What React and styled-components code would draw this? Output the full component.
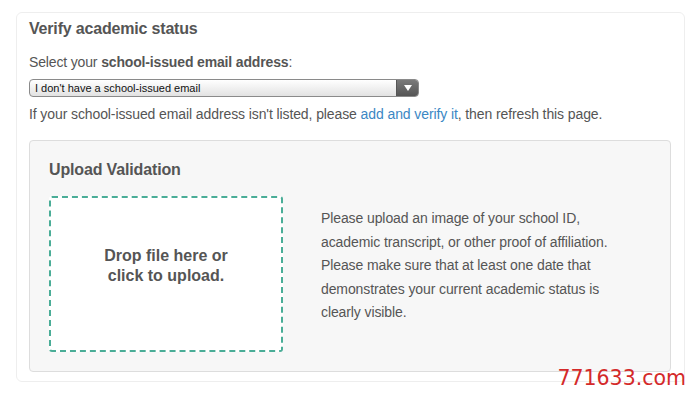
import React from 'react';
import styled, { createGlobalStyle } from 'styled-components';

const GlobalStyle = createGlobalStyle`
	body {
		margin: 0;
		background: #fff;
		font-family: "Liberation Sans", Arial, sans-serif;
		color: #555;
	}
`;

const Page = styled.div`
	position: relative;
	width: 700px;
	height: 397px;
	padding: 12px 15px 0 16px;
	box-sizing: border-box;
`;

const Card = styled.section`
	border: 1px solid #eeeeee;
	border-radius: 6px;
	height: 370px;
	box-sizing: border-box;
	padding: 6px 13px 0 12px;
`;

const Title = styled.h2`
	font-size: 16px;
	font-weight: bold;
	line-height: 20px;
	letter-spacing: -0.18px;
	margin: 0 0 14px;
	color: #555;
`;

const Label = styled.p`
	font-size: 14px;
	line-height: 18px;
	letter-spacing: -0.15px;
	margin: 0 0 8px;

	strong {
		font-weight: bold;
	}
`;

const Select = styled.div`
	display: flex;
	width: 390px;
	height: 18px;
	box-sizing: border-box;
	border: 1px solid #8a8a8a;
	border-radius: 4px;
	overflow: hidden;
	background: linear-gradient(#ffffff, #e2e2e2);
	font-size: 11px;
	color: #111;
`;

const SelectText = styled.span`
	flex: 1;
	padding-left: 5px;
	line-height: 16px;
`;

const SelectArrow = styled.span`
	width: 21px;
	display: flex;
	align-items: center;
	justify-content: center;
	background: linear-gradient(#7a7a7a, #555);
	border-left: 1px solid #555;
`;

const Helper = styled.p`
	font-size: 14px;
	line-height: 18px;
	letter-spacing: -0.1px;
	margin: 8px 0 17px;

	a {
		color: #3b87c4;
		text-decoration: none;
	}
`;

const Panel = styled.div`
	background: #f7f7f7;
	border: 1px solid #dddddd;
	border-radius: 4px;
	height: 232px;
	box-sizing: border-box;
	padding: 19px 20px 0 19px;
`;

const PanelTitle = styled.h3`
	font-size: 16px;
	font-weight: bold;
	line-height: 20px;
	letter-spacing: -0.15px;
	margin: 0 0 16px;
	color: #555;
`;

const PanelBody = styled.div`
	display: flex;
	align-items: flex-start;
	gap: 38px;
`;

const DropZone = styled.div`
	width: 234px;
	height: 156px;
	box-sizing: border-box;
	border: 2px dashed #4aad97;
	border-radius: 3px;
	background: #fff;
	display: flex;
	align-items: center;
	justify-content: center;
	text-align: center;
	font-size: 16px;
	font-weight: bold;
	line-height: 20px;
	color: #555;
	padding-bottom: 16px;
`;

const Instructions = styled.p`
	margin: 11px 0 0;
	width: 300px;
	font-size: 14px;
	line-height: 23.5px;
	letter-spacing: -0.1px;
	color: #555;
`;

const Watermark = styled.span`
	position: absolute;
	right: 14px;
	bottom: 7px;
	font-family: "DejaVu Sans", sans-serif;
	font-size: 20.5px;
	color: #d42a2a;
`;

const App = () => {
	return (
		<Page>
			<GlobalStyle />
			<Card>
				<Title>Verify academic status</Title>
				<Label>
					Select your <strong>school-issued email address</strong>:
				</Label>
				<Select>
					<SelectText>I don't have a school-issued email</SelectText>
					<SelectArrow>
						<svg width="8" height="6" viewBox="0 0 8 6">
							<path d="M0 0h8L4 6z" fill="#fff" />
						</svg>
					</SelectArrow>
				</Select>
				<Helper>
					If your school-issued email address isn't listed, please <a href="#">add and verify it</a>, then refresh this page.
				</Helper>
				<Panel>
					<PanelTitle>Upload Validation</PanelTitle>
					<PanelBody>
						<DropZone>
							Drop file here or
							<br />
							click to upload.
						</DropZone>
						<Instructions>
							Please upload an image of your school ID, academic transcript, or other proof of affiliation.
							Please make sure that at least one date that demonstrates your current academic status is
							clearly visible.
						</Instructions>
					</PanelBody>
				</Panel>
			</Card>
			<Watermark>771633.com</Watermark>
		</Page>
	);
};

export default App;
